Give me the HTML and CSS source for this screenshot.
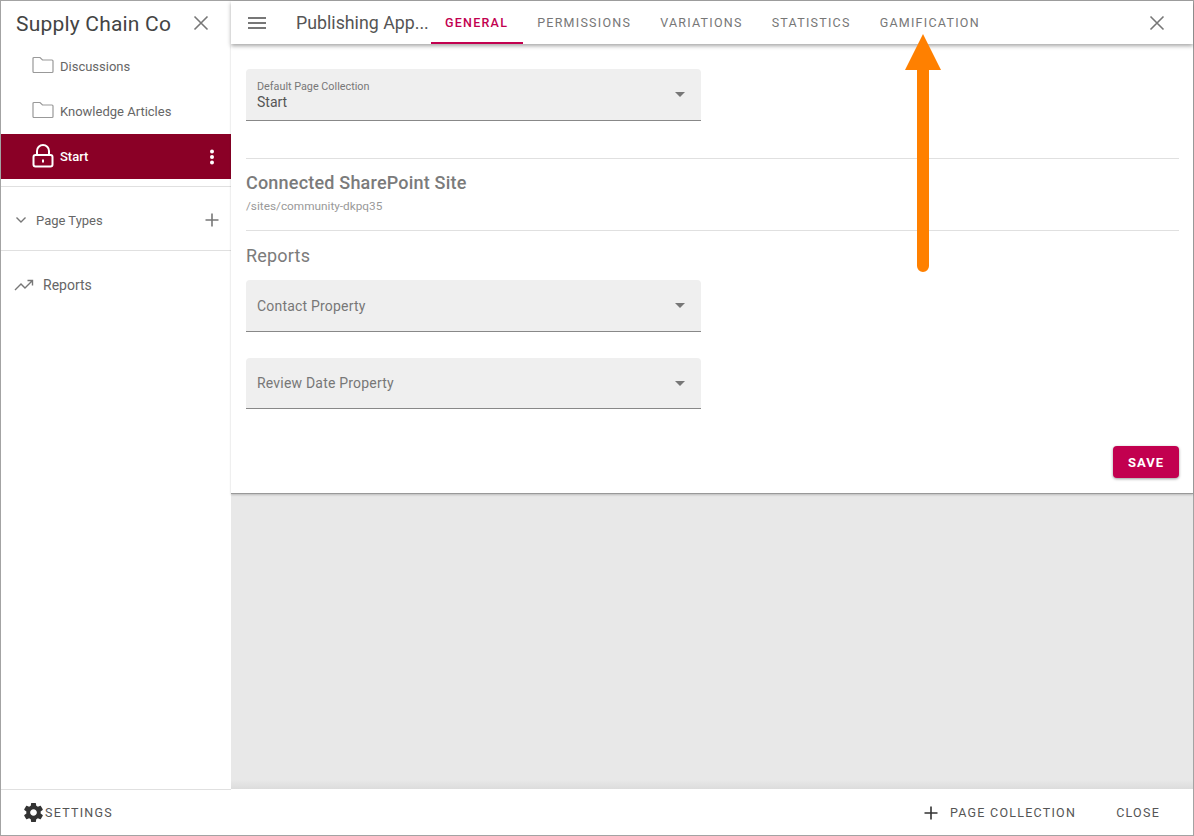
FILE: index.html
```html
<!DOCTYPE html>
<html lang="en">
<head>
  <meta charset="UTF-8">
  <meta name="viewport" content="width=device-width, initial-scale=1.0">
  <title>Publishing App</title>
  <link rel="stylesheet" href="styles.css">
</head>
<body>
  <div class="frame">
    <div class="workspace">

      <!-- Left navigation -->
      <aside class="sidebar">
        <div class="sidebar-head">
          <span class="sidebar-title">Supply Chain Co</span>
          <svg class="icon-close" width="18" height="18" viewBox="0 0 18 18"><path d="M2.5 2.5l13 13M15.5 2.5l-13 13"/></svg>
        </div>
        <div class="nav-item">
          <svg class="icon-folder" width="22" height="18" viewBox="0 0 22 18"><path d="M2 1.5h6l2.5 2.5H20a1 1 0 0 1 1 1v10.5a1 1 0 0 1-1 1H2a1 1 0 0 1-1-1V2.5a1 1 0 0 1 1-1z"/></svg>
          <span>Discussions</span>
        </div>
        <div class="nav-item">
          <svg class="icon-folder" width="22" height="18" viewBox="0 0 22 18"><path d="M2 1.5h6l2.5 2.5H20a1 1 0 0 1 1 1v10.5a1 1 0 0 1-1 1H2a1 1 0 0 1-1-1V2.5a1 1 0 0 1 1-1z"/></svg>
          <span>Knowledge Articles</span>
        </div>
        <div class="nav-item active">
          <svg class="icon-lock" width="22" height="24" viewBox="0 0 22 24"><path d="M5 11V7a6 6 0 0 1 12 0v4"/><rect x="1.5" y="11" width="19" height="11.5" rx="2"/><rect class="keyhole" x="10" y="15.5" width="2" height="3"/></svg>
          <span class="nav-label">Start</span>
          <svg class="icon-dots" width="6" height="16" viewBox="0 0 6 16"><circle cx="3" cy="2.5" r="2"/><circle cx="3" cy="8" r="2"/><circle cx="3" cy="13.5" r="2"/></svg>
        </div>
        <div class="section page-types">
          <svg class="icon-chevron" width="12" height="8" viewBox="0 0 12 8"><path d="M1.5 1.5L6 6l4.5-4.5"/></svg>
          <span class="nav-label">Page Types</span>
          <svg class="icon-plus" width="14" height="14" viewBox="0 0 14 14"><path d="M7 .5v13M.5 7h13"/></svg>
        </div>
        <div class="section reports-link">
          <svg class="icon-trend" width="20" height="12" viewBox="0 0 20 12"><path d="M1 11l6-6 4 4 7-7M13.5 1.5h5v5"/></svg>
          <span>Reports</span>
        </div>
      </aside>

      <main class="main">
        <header class="topbar">
          <svg class="icon-menu" width="18" height="12" viewBox="0 0 18 12"><path d="M0 1h18M0 6h18M0 11h18"/></svg>
          <span class="topbar-title">Publishing App...</span>
          <nav class="tabs">
            <a class="tab selected">General</a>
            <a class="tab">Permissions</a>
            <a class="tab">Variations</a>
            <a class="tab">Statistics</a>
            <a class="tab">Gamification</a>
          </nav>
          <svg class="icon-close top-close" width="18" height="18" viewBox="0 0 18 18"><path d="M2.5 2.5l13 13M15.5 2.5l-13 13"/></svg>
        </header>

        <section class="panel">
          <div class="field">
            <div class="field-text">
              <label class="field-small">Default Page Collection</label>
              <div class="field-value">Start</div>
            </div>
            <span class="caret"></span>
          </div>

          <hr class="rule rule-top">

          <h2 class="heading">Connected SharePoint Site</h2>
          <div class="site-path">/sites/community-dkpq35</div>

          <hr class="rule rule-mid">

          <h2 class="heading reports-heading">Reports</h2>
          <div class="field">
            <span class="field-label">Contact Property</span>
            <span class="caret"></span>
          </div>
          <div class="field field-review">
            <span class="field-label">Review Date Property</span>
            <span class="caret"></span>
          </div>

          <div class="panel-actions">
            <button class="save" type="button">Save</button>
          </div>
        </section>

        <div class="backdrop"></div>
      </main>
    </div>

    <footer class="footer">
      <div class="footer-left">
        <svg class="icon-gear" width="23" height="23" viewBox="0 0 24 24"><path d="M19.43 12.98c.04-.32.07-.64.07-.98s-.03-.66-.07-.98l2.11-1.65c.19-.15.24-.42.12-.64l-2-3.46c-.12-.22-.39-.3-.61-.22l-2.49 1c-.52-.4-1.08-.73-1.69-.98l-.38-2.65A.488.488 0 0 0 14 2h-4c-.25 0-.46.18-.49.42l-.38 2.65c-.61.25-1.17.59-1.69.98l-2.49-1c-.23-.09-.49 0-.61.22l-2 3.46c-.13.22-.07.49.12.64l2.11 1.65c-.04.32-.07.65-.07.98s.03.66.07.98l-2.11 1.65c-.19.15-.24.42-.12.64l2 3.46c.12.22.39.3.61.22l2.49-1c.52.4 1.08.73 1.69.98l.38 2.65c.03.24.24.42.49.42h4c.25 0 .46-.18.49-.42l.38-2.65c.61-.25 1.17-.59 1.69-.98l2.49 1c.23.09.49 0 .61-.22l2-3.46c.12-.22.07-.49-.12-.64l-2.11-1.65zM12 15.5c-1.93 0-3.5-1.57-3.5-3.5s1.57-3.5 3.5-3.5 3.5 1.57 3.5 3.5-1.57 3.5-3.5 3.5z"/></svg>
        <span class="footer-btn">Settings</span>
      </div>
      <div class="footer-right">
        <svg class="icon-plus dark" width="14" height="14" viewBox="0 0 14 14"><path d="M7 .5v13M.5 7h13"/></svg>
        <span class="footer-btn">Page Collection</span>
        <span class="footer-btn footer-close">Close</span>
      </div>
    </footer>

    <!-- Callout arrow drawn over the screenshot -->
    <svg class="callout" width="36" height="238" viewBox="0 0 36 238">
      <path d="M18 0L36 36H24V232a6 6 0 0 1-12 0V36H0z"/>
    </svg>
  </div>
</body>
</html>
```

FILE: styles.css
```css
* {
  box-sizing: border-box;
}
html, body {
  margin: 0;
  height: 100%;
}
body {
  font-family: Roboto, Arial, sans-serif;
  background-color: #fff;
  color: #666;
  overflow: hidden;
}
.frame {
  position: relative;
  width: 1194px;
  height: 836px;
  border: 1px solid #a3a3a3;
  display: flex;
  flex-direction: column;
}
.workspace {
  flex: 1;
  display: flex;
  min-height: 0;
}

/* Sidebar */
.sidebar {
  width: 230px;
  flex-shrink: 0;
  background-color: #fff;
}
.sidebar-head {
  height: 43px;
  display: flex;
  align-items: center;
  padding-left: 15px;
}
.sidebar-title {
  width: 154px;
  padding-top: 2px;
  white-space: nowrap;
  font-size: 21px;
  letter-spacing: 0.2px;
  color: #444;
}
.icon-close {
  margin-left: 22px;
  fill: none;
  stroke: #777;
  stroke-width: 1.6;
}
.nav-item {
  height: 45px;
  display: flex;
  align-items: center;
  padding-left: 31px;
  font-size: 13px;
  color: #666;
}
.nav-item span {
  margin-left: 6px;
}
.icon-folder {
  fill: none;
  stroke: #999;
  stroke-width: 1.2;
  margin-top: -4px;
}
.nav-item.active {
  background-color: #8a0026;
  color: #fff;
  font-weight: 500;
}
.icon-lock {
  fill: none;
  stroke: #fff;
  stroke-width: 2;
  margin-top: -1px;
}
.icon-lock .keyhole {
  fill: #fff;
  stroke: none;
}
.nav-item.active .nav-label {
  flex: 1;
}
.icon-dots {
  fill: #fff;
  margin-right: 16px;
}
.section {
  display: flex;
  align-items: center;
  font-size: 13px;
  color: #666;
}
.page-types {
  margin-top: 7px;
  height: 65px;
  padding: 3px 0 0 14px;
  border-top: 1px solid #e0e0e0;
  border-bottom: 1px solid #e0e0e0;
}
.page-types .nav-label {
  flex: 1;
  margin-left: 9px;
}
.icon-chevron {
  fill: none;
  stroke: #777;
  stroke-width: 1.4;
}
.icon-plus {
  fill: none;
  stroke: #777;
  stroke-width: 1.6;
  margin-right: 12px;
}
.icon-plus.dark {
  stroke: #333;
}
.reports-link {
  height: 67px;
  padding-left: 13px;
  font-size: 14px;
}
.reports-link span {
  margin-left: 9px;
}
.icon-trend {
  fill: none;
  stroke: #777;
  stroke-width: 1.4;
}

/* Main area */
.main {
  flex: 1;
  display: flex;
  flex-direction: column;
  min-width: 0;
}
.topbar {
  position: relative;
  z-index: 2;
  height: 43px;
  flex-shrink: 0;
  display: flex;
  align-items: center;
  padding-left: 17px;
  background-color: #fff;
  box-shadow: 0 2px 4px rgba(0, 0, 0, 0.35);
}
.icon-menu {
  fill: none;
  stroke: #777;
  stroke-width: 2;
}
.topbar-title {
  margin-left: 30px;
  width: 135px;
  font-size: 17.8px;
  color: #555;
  white-space: nowrap;
}
.tabs {
  display: flex;
  align-self: stretch;
}
.tab {
  display: flex;
  align-items: center;
  padding: 2px 14.5px 0;
  font-size: 12.5px;
  letter-spacing: 1.25px;
  text-transform: uppercase;
  color: #777;
  border-bottom: 2px solid transparent;
}
.tab.selected {
  padding-left: 14px;
  color: #c2004f;
  font-weight: 500;
  border-bottom-color: #c2004f;
}
.top-close {
  margin-left: auto;
  margin-right: 27px;
}
.panel {
  height: 450px;
  flex-shrink: 0;
  padding: 25px 14px 0 15px;
  background-color: #fff;
  border-bottom: 1px solid #999;
  box-shadow: 0 1px 2px rgba(0, 0, 0, 0.2);
  position: relative;
  z-index: 1;
}
.field {
  width: 455px;
  height: 52px;
  display: flex;
  align-items: center;
  justify-content: space-between;
  padding: 0 16px 0 11px;
  background-color: #efefef;
  border-bottom: 1px solid #888;
  border-radius: 4px 4px 0 0;
}
.field-text {
  padding-top: 2px;
  line-height: 1;
}
.field-small {
  display: block;
  font-size: 10.8px;
  color: #777;
  margin-bottom: 2px;
}
.field-value {
  font-size: 14px;
  color: #555;
}
.field-label {
  font-size: 14px;
  color: #777;
  letter-spacing: 0.2px;
}
.field-review {
  height: 51px;
  margin-top: 26px;
}
.caret {
  width: 0;
  height: 0;
  border-left: 5px solid transparent;
  border-right: 5px solid transparent;
  border-top: 5px solid #777;
}
.rule {
  margin: 0;
  border: 0;
  border-top: 1px solid #e0e0e0;
}
.rule-top {
  margin-top: 37px;
}
.rule-mid {
  margin-top: 17px;
}
.heading {
  margin: 0;
  font-size: 18px;
  font-weight: 500;
  line-height: 24px;
  letter-spacing: 0.2px;
  color: #7b7b7b;
}
.rule-top + .heading {
  margin-top: 12px;
}
.reports-heading {
  margin-top: 13px;
  margin-bottom: 12px;
  font-weight: 400;
}
.site-path {
  margin-top: 4px;
  font-size: 11.8px;
  line-height: 14px;
  color: #999;
}
.panel-actions {
  display: flex;
  justify-content: flex-end;
  margin-top: 37px;
}
.save {
  width: 66px;
  height: 32px;
  border: none;
  border-radius: 4px;
  background-color: #c2004f;
  color: #fff;
  font-family: inherit;
  font-size: 13px;
  font-weight: 700;
  letter-spacing: 1px;
  text-transform: uppercase;
  box-shadow: 0 1px 3px rgba(0, 0, 0, 0.4);
}
.backdrop {
  flex: 1;
  background: linear-gradient(to bottom, #e8e8e8 calc(100% - 9px), #dcdcdc);
}

/* Footer */
.footer {
  height: 46px;
  flex-shrink: 0;
  display: flex;
  justify-content: space-between;
  background-color: #fff;
}
.footer-left, .footer-right {
  display: flex;
  align-items: center;
}
.footer-left {
  width: 230px;
  padding-left: 21px;
  border-top: 1px solid #e0e0e0;
}
.footer-right {
  padding: 1px 33px 0 0;
}
.footer-btn {
  font-size: 12.5px;
  letter-spacing: 1.25px;
  text-transform: uppercase;
  color: #555;
}
.icon-gear {
  fill: #333;
}
.footer-close {
  margin-left: 40px;
}

/* Arrow */
.callout {
  position: absolute;
  left: 904px;
  top: 33px;
  z-index: 5;
  fill: #ff8000;
}
```
